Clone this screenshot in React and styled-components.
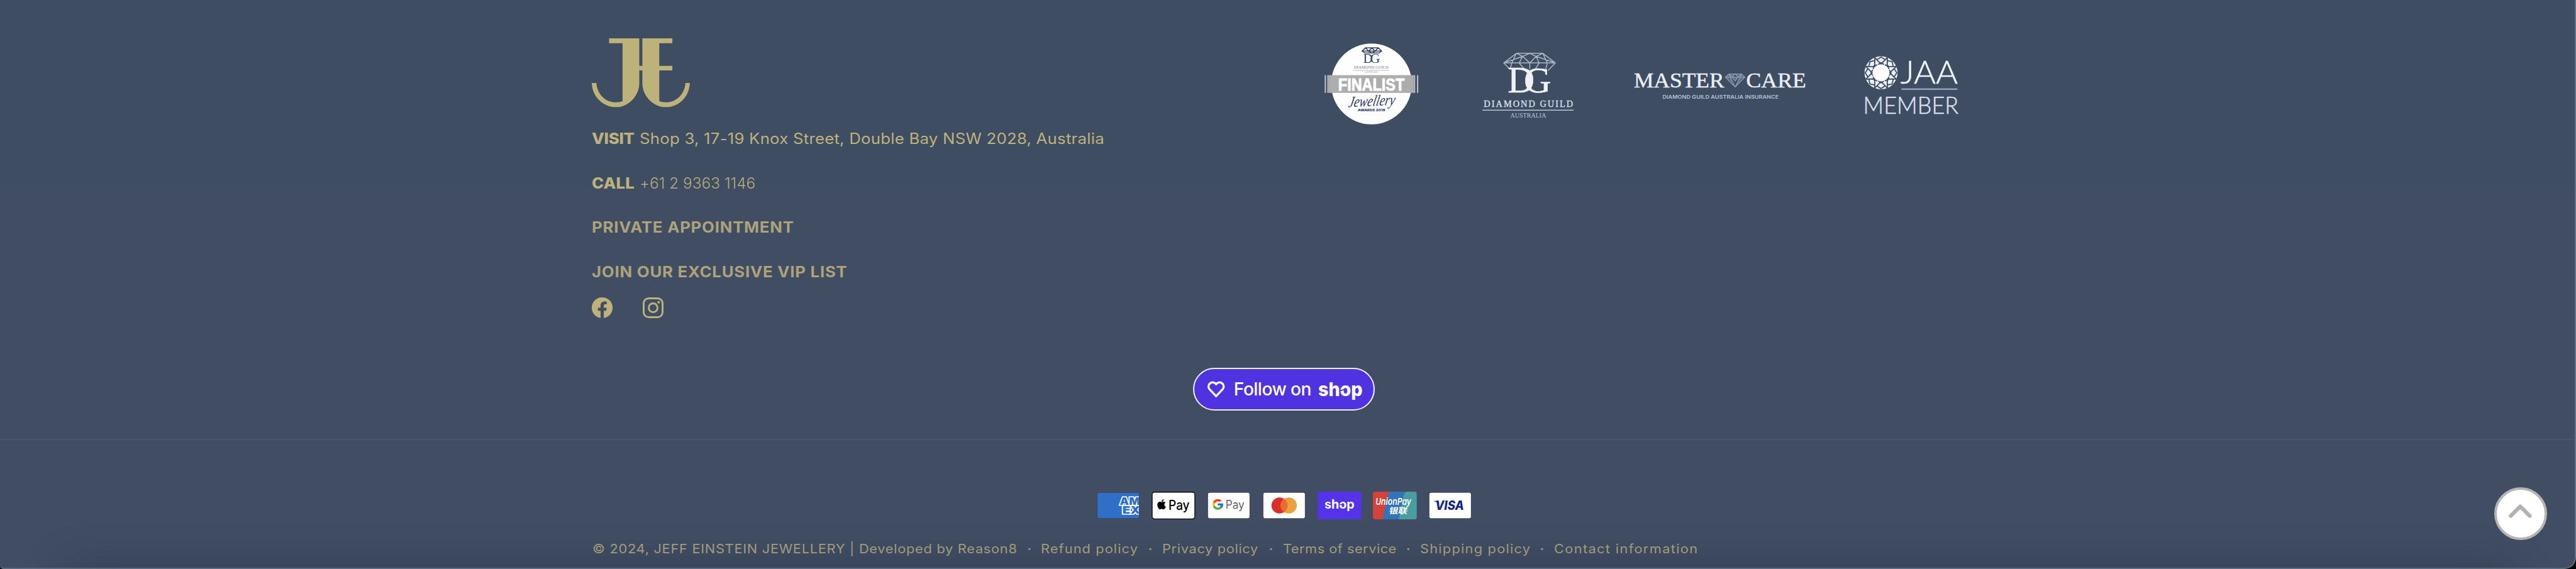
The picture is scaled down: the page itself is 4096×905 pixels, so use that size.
import React from 'react';
import styled, { createGlobalStyle } from 'styled-components';
import { FaApple } from 'react-icons/fa';
import { FcGoogle } from 'react-icons/fc';

const SANS = 'Inter, "Liberation Sans", sans-serif';
const SERIF = '"Liberation Serif", serif';
const LATO = 'Lato, sans-serif';
const GOLD = '#beb27b';

/* 1rem is ten design pixels; the design is 4466 pixels wide. */
const GlobalStyle = createGlobalStyle`
  html { font-size: calc(100vw / 446.6); background: #000; }
  body { margin: 0; overflow: hidden; font-family: ${SANS}; }
  *, *::before, *::after { box-sizing: border-box; }
  svg { display: block; flex: none; overflow: visible; }
  svg text { white-space: pre; }
`;

const Page = styled.footer`
  position: relative;
  display: flex;
  flex-direction: column;
  height: 98.7rem;
  overflow: hidden;
  border-right: 2px solid #667080;
  border-bottom: 2px solid #5e6a7c;
  border-radius: 0 0 2rem 0.6rem;
  background: linear-gradient(#3e4d62 0 32.4rem, #414d63 32.4rem);
`;

const BottomShade = styled.div`
  position: absolute;
  top: 100%;
  left: 11rem;
  right: 11rem;
  height: 20rem;
  box-shadow: 0 0 7.5rem rgba(16, 30, 40, 0.27);
`;

const Main = styled.div`
  display: flex;
  height: 57.2rem;
  padding: 6.6rem 0 0 102.6rem;
`;

const Contact = styled.section`
  display: flex;
  flex-direction: column;
  width: 124.4rem;
`;

const LogoMark = styled.svg`
  width: 17rem;
  height: 11.9rem;
  margin-bottom: 1.8rem;
  fill: ${GOLD};
`;

const Line = styled.p`
  display: flex;
  gap: 0.9rem;
  margin: 0;
  font-size: 2.6rem;
  line-height: 7.7rem;
  white-space: nowrap;
  color: ${GOLD};
`;

/* Widened letterforms; the layout width stays that of the widened text. */
const Wide = styled.span`
  width: ${(p) => p.$w}rem;
  letter-spacing: ${(p) => p.$track}rem;
  transform: scaleX(${(p) => p.$stretch ?? 1.08});
  transform-origin: 0 50%;
`;

const Label = styled(Wide)`
  font-weight: 800;
`;

const Detail = styled(Wide)`
  font-weight: ${(p) => (p.$light ? 300 : 400)};
  color: ${(p) => (p.$light ? '#b3a97b' : GOLD)};
`;

const TextLink = styled(Wide)`
  font-weight: 700;
  color: #aca37a;
`;

const Social = styled.div`
  display: flex;
  gap: 5.2rem;
  margin-top: 0.5rem;
`;

const SocialIcon = styled.svg`
  width: 3.6rem;
  height: 3.6rem;
  fill: ${GOLD};
`;

const Awards = styled.section`
  display: flex;
  align-items: center;
  align-self: flex-start;
  gap: 3rem;
  height: 18rem;
  margin-top: -0.6rem;
`;

const Award = styled.svg`
  width: ${(p) => p.$w}rem;
  height: ${(p) => p.$h}rem;
`;

const FollowRow = styled.div`
  display: flex;
  justify-content: center;
  height: 18.9rem;
  padding: 6.6rem 1.2rem 0 0;
`;

const FollowButton = styled.button`
  display: flex;
  align-items: center;
  width: 31.6rem;
  height: 7.4rem;
  padding: 0 0 0 2.2rem;
  border: 2px solid #f0eef2;
  border-radius: 3.7rem;
  background: #4f33e0;
  color: #fff;
  font-family: ${SANS};
`;

const Heart = styled.svg`
  width: 3.2rem;
  height: 3rem;
  margin-right: 1.5rem;
`;

const FollowText = styled.span`
  font-size: 3.07rem;
  font-weight: 500;
  letter-spacing: -0.06rem;
  white-space: nowrap;
`;

const ShopWord = styled.svg`
  width: 7.8rem;
  height: 4.4rem;
  margin-left: 1.2rem;
`;

const Bottom = styled.div`
  display: flex;
  flex-direction: column;
  flex: 1;
  border-top: 2px solid #4c5667;
`;

const Payments = styled.div`
  display: flex;
  justify-content: center;
  gap: 2rem;
  padding: 8.9rem 1.2rem 0 0;
`;

const Card = styled.svg`
  width: 7.6rem;
  height: 4.8rem;
`;

const Legal = styled.div`
  display: flex;
  margin: 3.6rem 0 0 102.7rem;
  font-size: 2.2rem;
  line-height: 3rem;
  white-space: nowrap;
  color: #a29b79;
`;

const Separator = styled.span`
  width: 4.1rem;
  font-weight: 700;
  text-align: center;
`;

const ToTop = styled.button`
  position: absolute;
  right: 4.8rem;
  bottom: 4.8rem;
  display: grid;
  place-items: center;
  width: 9.2rem;
  height: 9.2rem;
  padding: 0;
  border: 4px solid #b5b5b5;
  border-radius: 50%;
  background: #fff;
`;

const Chevron = styled.svg`
  width: 4rem;
  height: 2.4rem;
  margin-bottom: 0.9rem;
`;

/* One fitted word inside a drawing: x and baseline y, with a fixed width. */
const Word = ({ children, w, font = SANS, size, weight = 400, ...rest }) => (
  <text fontFamily={font} fontSize={size} fontWeight={weight} textLength={w} lengthAdjust="spacingAndGlyphs" {...rest}>
    {children}
  </text>
);

const FinalistAward = () => (
  <Award $w={24} $h={18} viewBox="0 30 720 540">
    <circle cx="323" cy="287" r="210" fill="#fefefe" />
    <g fill="none" stroke="#3a4566" strokeWidth="5">
      <path d="M292 99H358L376 116L362 126H288L274 116ZM274 116H376M292 99L308 116L325 99L342 116L358 99M308 116L325 126L342 116" />
    </g>
    <Word x="280" y="178" w="50" size="72" font={SERIF} fill="#3a4566">D</Word>
    <Word x="316" y="178" w="52" size="72" font={SERIF} fill="#3a4566">G</Word>
    <Word x="232" y="208" w="180" size="20" font={SERIF} fill="#6c7690">DIAMOND GUILD</Word>
    <path d="M228 216H414" stroke="#8a93a8" strokeWidth="2" />
    <Word x="288" y="230" w="70" size="13" font={SERIF} fill="#8a93a8">AUSTRALIA</Word>
    <path d="M99 241H545V333H99Z" fill="#adadad" />
    <path d="M83 241V333M563 241V333" stroke="#b9bec6" strokeWidth="7" />
    <path d="M96 241V333M548 241V333" stroke="#d4d6da" strokeWidth="4" />
    <Word x="150" y="320" w="345" size="88" weight="700" font='"Liberation Sans", sans-serif' fill="#fff" stroke="#fff" strokeWidth="3">FINALIST</Word>
    <g transform="translate(200 408) rotate(-3) skewX(-14)">
      <Word x="0" y="0" w="242" size="80" fontStyle="italic" font={SERIF} fill="#2c3a63">Jewellery</Word>
    </g>
    <Word x="252" y="428" w="142" size="17" weight="800" fill="#2c3a63">AWARDS 2018</Word>
  </Award>
);

const GuildAward = () => (
  <Award $w={23} $h={16} viewBox="30 0 690 480">
    <path
      d="M295 68H433L498 118L460 158M295 68L230 118L262 152M230 118H498M295 68L272 118L262 152M230 118L328 84L365 118L398 84L498 118M433 68L456 118L448 150M328 84L310 118L335 148M398 84L414 118L395 148M365 118V150M295 68L328 84L365 68L398 84L433 68"
      fill="none" stroke="#a9b5c6" strokeWidth="5"
    />
    <Word x="250" y="270" w="140" size="194" font={SERIF} fill="#eef2f7" stroke="#eef2f7" strokeWidth="2">D</Word>
    <Word x="334" y="270" w="142" size="190" font={SERIF} fill="#eef2f7" stroke="#eef2f7" strokeWidth="2">G</Word>
    <text x="126" y="346" textLength="464" lengthAdjust="spacing" fontFamily={SERIF} fontSize="47" fill="#dbe2ec" stroke="#dbe2ec" strokeWidth="1">DIAMOND GUILD</text>
    <path d="M119 364H593" stroke="#b9c4d4" strokeWidth="5" />
    <Word x="264" y="402" w="186" size="34" font={SERIF} fill="#b9c4d4">AUSTRALIA</Word>
  </Award>
);

const MasterCareAward = () => (
  <Award $w={37} $h={10} viewBox="0 0 1110 300">
    <Word x="98" y="153" w="470" size="113" font={SERIF} fill="#e9eef5" stroke="#e9eef5" strokeWidth="1.5">MASTER</Word>
    <path d="M592 84H658L676 101L625 152L573 101ZM573 101H676M592 84L600 101L625 152L650 101L658 84L640 101L625 84L608 101L592 84M608 101L625 120L640 101" fill="#7b889e" fillOpacity="0.6" stroke="#8f9bb0" strokeWidth="4" />
    <Word x="682" y="153" w="312" size="113" font={SERIF} fill="#e9eef5" stroke="#e9eef5" strokeWidth="1.5">CARE</Word>
    <Word x="247" y="212" w="604" size="26" weight="600" fill="#b6c2d3">DIAMOND GUILD AUSTRALIA INSURANCE</Word>
  </Award>
);

const FACETS = [0, 45, 90, 135, 180, 225, 270, 315];

const JaaAward = () => (
  <Award $w={23} $h={14} viewBox="0 0 690 420">
    <circle cx="183" cy="140" r="86" fill="#eaf0f7" />
    {FACETS.map((a) => (
      <g key={a} transform={`rotate(${a} 183 140)`} fill="none" stroke="#414d63" strokeWidth="6">
        <path d="M183 94L205 72L183 58L161 72ZM205 72L216 60M161 72L150 60" />
        <path d="M168 97L183 88L198 97" />
      </g>
    ))}
    <circle cx="183" cy="140" r="41" fill="#fff" />
    <Word x="284" y="197" w="298" size="170" weight="300" font={LATO} fill="#eef3f9" stroke="#eef3f9" strokeWidth="2">JAA</Word>
    <path d="M289 225H580" stroke="#95a3b8" strokeWidth="8" />
    <Word x="90" y="352" w="496" size="121" weight="300" font={LATO} fill="#d6dfea" stroke="#d6dfea" strokeWidth="2">MEMBER</Word>
  </Award>
);

const Amex = () => (
  <Card viewBox="0 0 76 48">
    <clipPath id="amex"><rect x="2" y="2" width="72" height="44" rx="3" /></clipPath>
    <rect x="1" y="1" width="74" height="46" rx="4" fill="#3c485b" />
    <g clipPath="url(#amex)">
      <path d="M2 2H74V46H2Z" fill="#306fc8" />
      <g fill="#306fc8" stroke="#fff" strokeWidth="3.4" paintOrder="stroke">
        <Word x="41" y="22.8" w="35" size="18" weight="900">AM</Word>
        <Word x="45.5" y="38" w="31" size="18" weight="900">EX</Word>
      </g>
    </g>
  </Card>
);

const ApplePay = () => (
  <Card viewBox="0 0 76 48">
    <rect x="1.1" y="0.8" width="74" height="46.4" rx="4" fill="#fff" stroke="#000" strokeWidth="1.4" />
    <FaApple x="7.4" y="12" size="20" />
    <Word x="29.5" y="31.3" w="36.5" size="23" weight="500">Pay</Word>
  </Card>
);

const Plain = ({ children }) => (
  <Card viewBox="0 0 76 48">
    <rect x="1" y="1" width="74" height="46" rx="4" fill="#3a465a" />
    <rect x="2" y="2" width="72" height="44" rx="3" fill="#fff" />
    {children}
  </Card>
);

const UnionPay = () => (
  <Card viewBox="0 0 76 48">
    <clipPath id="union"><rect width="76" height="48" rx="4" /></clipPath>
    <g clipPath="url(#union)">
      <path d="M0 0H76V48H0Z" fill="#d64239" />
      <path d="M32 0H76V48H17.5Q17 45 18 41L25.5 6Q26.5 0 32 0Z" fill="#3473b6" />
      <path d="M60 0H76V48H45.5Q45 45 46 41L53.5 6Q55 0 60 0Z" fill="#489da1" />
    </g>
    <Word x="4.5" y="22.8" w="62" size="16.5" weight="600" fontStyle="italic" fill="#fff">UnionPay</Word>
    <g transform="skewX(-10)">
      <Word x="34" y="38" w="32" size="14" weight="700" font='"Noto Sans CJK SC", sans-serif' fill="#fff">银联</Word>
    </g>
  </Card>
);

const ShopPay = () => (
  <Card viewBox="0 0 76 48">
    <rect width="76" height="48" rx="4" fill="#5433eb" />
    <Word x="12" y="29.8" w="52" size="21.5" weight="700" fill="#fff">shop</Word>
    <path d="M37 23.4L42.5 21.6" stroke="#5433eb" strokeWidth="1.5" />
  </Card>
);

const LEGAL = [
  ['© 2024, JEFF EINSTEIN JEWELLERY | Developed by Reason8', 73.7, 0.073],
  ['Refund policy', 16.9, 0.11],
  ['Privacy policy', 16.8, 0.067],
  ['Terms of service', 19.7, 0.05],
  ['Shipping policy', 19.1, 0.126],
  ['Contact information', 24.9, 0.137],
];

export default function App() {
  return (
    <>
      <GlobalStyle />
      <Page>
        <BottomShade />
        <Main>
          <Contact>
            <LogoMark viewBox="78 78 510 357" preserveAspectRatio="none">
              <path d="M168 78H325V310C325 375 275 425 222 435H188C125 425 80 375 78 310H102C106 370 150 411 205 411Q225 411 238 405V103H168Z" />
              <path d="M341 78H497V103H429V221H497V245H429V405Q445 411 463 411C520 411 562 365 565 310H588C585 375 543 425 480 435H446C390 425 341 375 341 310V245H324V221H341Z" />
            </LogoMark>
            <Line>
              <Label $w={7.4} $track={-0.025}>VISIT</Label>
              <Detail $w={80.6} $track={0.025}>Shop 3, 17-19 Knox Street, Double Bay NSW 2028, Australia</Detail>
            </Line>
            <Line>
              <Label $w={7.4} $track={0.02}>CALL</Label>
              <Detail $light $w={20.1} $stretch={1.02} $track={0.007}>+61 2 9363 1146</Detail>
            </Line>
            <Line><TextLink $w={35} $track={0.08}>PRIVATE APPOINTMENT</TextLink></Line>
            <Line><TextLink $w={44.3} $track={0.08}>JOIN OUR EXCLUSIVE VIP LIST</TextLink></Line>
            <Social>
              <SocialIcon viewBox="0 0 36 36">
                <path d="M18 0a18 18 0 0 0-2.8 35.8V23.2H10.6V18h4.6v-4c0-4.5 2.7-7 6.8-7 2 0 4 .35 4 .35v4.4h-2.3c-2.2 0-2.9 1.4-2.9 2.8V18h5l-.8 5.2h-4.200v12.6A18 18 0 0 0 18 0Z" />
              </SocialIcon>
              <SocialIcon viewBox="0 0 36 36">
                <rect x="1.6" y="1.6" width="32.8" height="32.8" rx="8.8" fill="none" stroke={GOLD} strokeWidth="3.2" />
                <circle cx="18" cy="18" r="7.6" fill="none" stroke={GOLD} strokeWidth="3.2" />
                <circle cx="27.6" cy="8.4" r="2.2" />
              </SocialIcon>
            </Social>
          </Contact>
          <Awards>
            <FinalistAward />
            <GuildAward />
            <MasterCareAward />
            <JaaAward />
          </Awards>
        </Main>
        <FollowRow>
          <FollowButton>
            <Heart viewBox="0 0 32 30">
              <path d="M16 27.500L4.4 15.2A7.2 7.2 0 0 1 14.4 5L16 6.6L17.6 5A7.2 7.2 0 0 1 27.6 15.2Z" fill="none" stroke="#fff" strokeWidth="3.6" />
            </Heart>
            <FollowText>Follow on</FollowText>
            <ShopWord viewBox="0 0 78 44">
              <Word x="0" y="33.5" w="77" size="32.5" weight="800" fill="#fff">shop</Word>
              <path d="M37 25L46 22" stroke="#4f33e0" strokeWidth="2" />
            </ShopWord>
          </FollowButton>
        </FollowRow>
        <Bottom>
          <Payments>
            <Amex />
            <ApplePay />
            <Plain>
              <FcGoogle x="8" y="11.2" size="22" />
              <Word x="32.5" y="29.7" w="32.5" size="20" fill="#5f6368">Pay</Word>
            </Plain>
            <Plain>
              <circle cx="30" cy="24" r="14" fill="#d9302c" />
              <circle cx="46" cy="24" r="14" fill="#e9a23f" />
              <path d="M38 12.5a14 14 0 0 1 0 23a14 14 0 0 1 0-23Z" fill="#ed6b2d" />
            </Plain>
            <ShopPay />
            <UnionPay />
            <Plain>
              <Word x="12" y="31.7" w="50" size="21.5" weight="800" fontStyle="italic" fill="#142688">VISA</Word>
              <path d="M10 16H16.5L19 20Q15 17 10 16.8Z" fill="#142688" />
            </Plain>
          </Payments>
          <Legal>
            {LEGAL.map(([text, width, track], i) => (
              <React.Fragment key={text}>
                {i > 0 && <Separator>·</Separator>}
                <Wide $w={width} $track={track}>{text}</Wide>
              </React.Fragment>
            ))}
          </Legal>
        </Bottom>
        <ToTop aria-label="Back to top">
          <Chevron viewBox="0 0 40 24">
            <path d="M3.5 20.2L20 3.7L36.5 20.2" fill="none" stroke="#b2b2b2" strokeWidth="6.7" strokeLinecap="round" strokeLinejoin="round" />
          </Chevron>
        </ToTop>
      </Page>
    </>
  );
}
